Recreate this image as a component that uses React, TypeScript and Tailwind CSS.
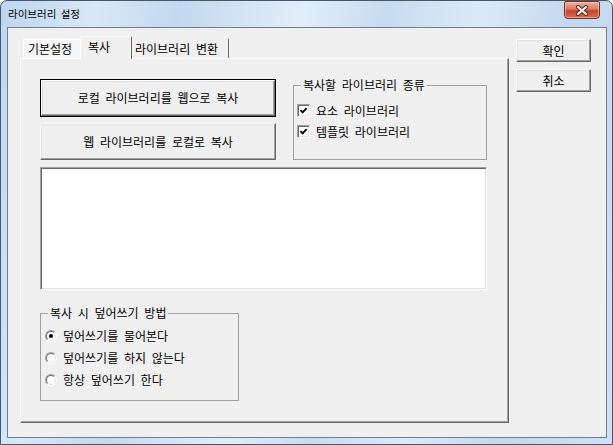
import React from "react";

function Btn({ className, children, def }: { className: string; children?: React.ReactNode; def?: boolean }) {
  const inner = (
    <div className="flex h-full w-full items-center justify-center border border-t-white border-l-white border-r-[#696969] border-b-[#696969] bg-[#f0f0f0] shadow-[inset_-1px_-1px_0_#a0a0a0,inset_1px_1px_0_#e3e3e3]">
      {children}
    </div>
  );
  if (def) {
    return <div className={`border border-black ${className}`}>{inner}</div>;
  }
  return <div className={className}>{inner}</div>;
}

function Check({ label }: { label: string }) {
  return (
    <div className="flex h-[21px] items-center">
      <div className="ml-[3px] flex h-[13px] w-[13px] items-center justify-center border border-t-[#a0a0a0] border-l-[#a0a0a0] border-r-white border-b-white bg-white shadow-[inset_1px_1px_0_#696969,inset_-1px_-1px_0_#e3e3e3]">
        <svg width="9" height="9" viewBox="0 0 9 9">
          <path d="M1.5 4.2 L3.6 6.4 L7.6 2.2" fill="none" stroke="#000" strokeWidth="1.9" />
        </svg>
      </div>
      <span className="ml-[6px] text-[12px] leading-[14px] [word-spacing:3px]">{label}</span>
    </div>
  );
}

function Radio({ label, on }: { label: string; on?: boolean }) {
  return (
    <div className="flex h-[22px] items-center">
      <div className="ml-[4px] flex h-[12px] w-[12px] items-center justify-center rounded-full border border-t-[#a0a0a0] border-l-[#a0a0a0] border-r-white border-b-white bg-white">
        <div className="flex h-[10px] w-[10px] items-center justify-center rounded-full border border-t-[#696969] border-l-[#696969] border-r-[#e3e3e3] border-b-[#e3e3e3]">
          {on ? <div className="h-[4px] w-[4px] rounded-full bg-black" /> : null}
        </div>
      </div>
      <span className="ml-[6px] text-[12px] leading-[14px] [word-spacing:3px]">{label}</span>
    </div>
  );
}

export default function App() {
  return (
    <div className="h-[445px] w-[613px] bg-white [font-family:'Noto_Sans_CJK_KR',sans-serif] text-black">
      <div className="flex h-[445px] w-[613px] flex-col rounded-t-[7px] border border-[#46586e] bg-[linear-gradient(100deg,#bfd6ee_0%,#d8e8f7_14%,#c3d9ef_26%,#e2eef9_44%,#c7dcf1_56%,#dceaf7_70%,#c2d8ef_84%,#cfe2f4_100%)]">
        <div className="flex h-[26px] items-start">
          <div className="ml-[7px] mt-[6px] text-[10.5px] leading-[14px] [word-spacing:2px]">라이브러리 설정</div>
          <div className="flex-1" />
          <div className="mr-[12px] flex h-[18px] w-[36px] items-center justify-center rounded-b-[4px] rounded-t-[2px] border border-[#7a2b1d] bg-[linear-gradient(180deg,#eab3a4_0%,#d9775f_45%,#c2432a_55%,#d86d50_100%)] shadow-[inset_0_0_0_1px_rgba(255,220,210,0.5)]">
            <svg width="14" height="11" viewBox="0 0 14 11">
              <path d="M3 2 L11 9 M11 2 L3 9" stroke="#5a1c12" strokeWidth="4" strokeLinecap="round" />
              <path d="M3 2 L11 9 M11 2 L3 9" stroke="#ffffff" strokeWidth="2.2" strokeLinecap="round" />
            </svg>
          </div>
        </div>
        <div className="ml-[6px] flex h-[411px] w-[600px] border border-[#6d7f95] bg-[#f0f0f0]">
          <div className="ml-[12px] flex flex-col pt-[8px]">
            <div className="ml-[3px] flex h-[22px] items-end">
              <div className="flex h-[19px] w-[57px] items-center border-t border-l border-white bg-[#f6f6f6] pl-[4px] text-[12px] leading-[14px]">
                기본설정
              </div>
              <div className="relative z-10 -mb-[1px] flex h-[23px] w-[52px] items-start border-t border-l border-r border-t-white border-l-white border-r-[#696969] bg-[#f0f0f0] pl-[7px] pt-[3px] text-[12px] leading-[14px]">
                복사
              </div>
              <div className="flex h-[19px] w-[97px] items-center border-r border-[#696969] pl-[3px] text-[12px] leading-[14px] [word-spacing:3px]">
                라이브러리 변환
              </div>
            </div>
            <div className="flex h-[365px] w-[489px] flex-col border border-t-white border-l-white border-r-[#696969] border-b-[#696969] pl-[19px] pt-[20px] shadow-[inset_-1px_-1px_0_#a0a0a0]">
              <div className="flex items-start">
                <div className="flex flex-col gap-[6px]">
                  <Btn def className="h-[38px] w-[236px]">
                    <span className="text-[12px] leading-[14px] [word-spacing:3px]">로컬 라이브러리를 웹으로 복사</span>
                  </Btn>
                  <Btn className="h-[37px] w-[236px]">
                    <span className="text-[12px] leading-[14px] [word-spacing:3px]">웹 라이브러리를 로컬로 복사</span>
                  </Btn>
                </div>
                <fieldset className="ml-[17px] h-[81px] w-[194px] border border-[#a0a0a0] pt-[9px]">
                  <legend className="ml-[7px] px-[2px] text-[12px] leading-[12px] [word-spacing:3px]">복사할 라이브러리 종류</legend>
                  <Check label="요소 라이브러리" />
                  <Check label="템플릿 라이브러리" />
                </fieldset>
              </div>
              <div className="mt-[7px] h-[123px] w-[447px] border border-t-[#a0a0a0] border-l-[#a0a0a0] border-r-white border-b-white bg-white shadow-[inset_1px_1px_0_#696969,inset_-1px_-1px_0_#e3e3e3]" />
              <fieldset className="mt-[17px] h-[94px] w-[199px] border border-[#a0a0a0] pt-[6px]">
                <legend className="ml-[7px] px-[2px] text-[12px] leading-[12px] [word-spacing:3px]">복사 시 덮어쓰기 방법</legend>
                <Radio on label="덮어쓰기를 물어본다" />
                <Radio label="덮어쓰기를 하지 않는다" />
                <Radio label="항상 덮어쓰기 한다" />
              </fieldset>
            </div>
          </div>
          <div className="ml-[7px] flex flex-col gap-[7px] pt-[11px]">
            <Btn className="h-[23px] w-[75px]">
              <span className="text-[12px] leading-[14px]">확인</span>
            </Btn>
            <Btn className="h-[23px] w-[75px]">
              <span className="text-[12px] leading-[14px]">취소</span>
            </Btn>
          </div>
        </div>
      </div>
    </div>
  );
}
